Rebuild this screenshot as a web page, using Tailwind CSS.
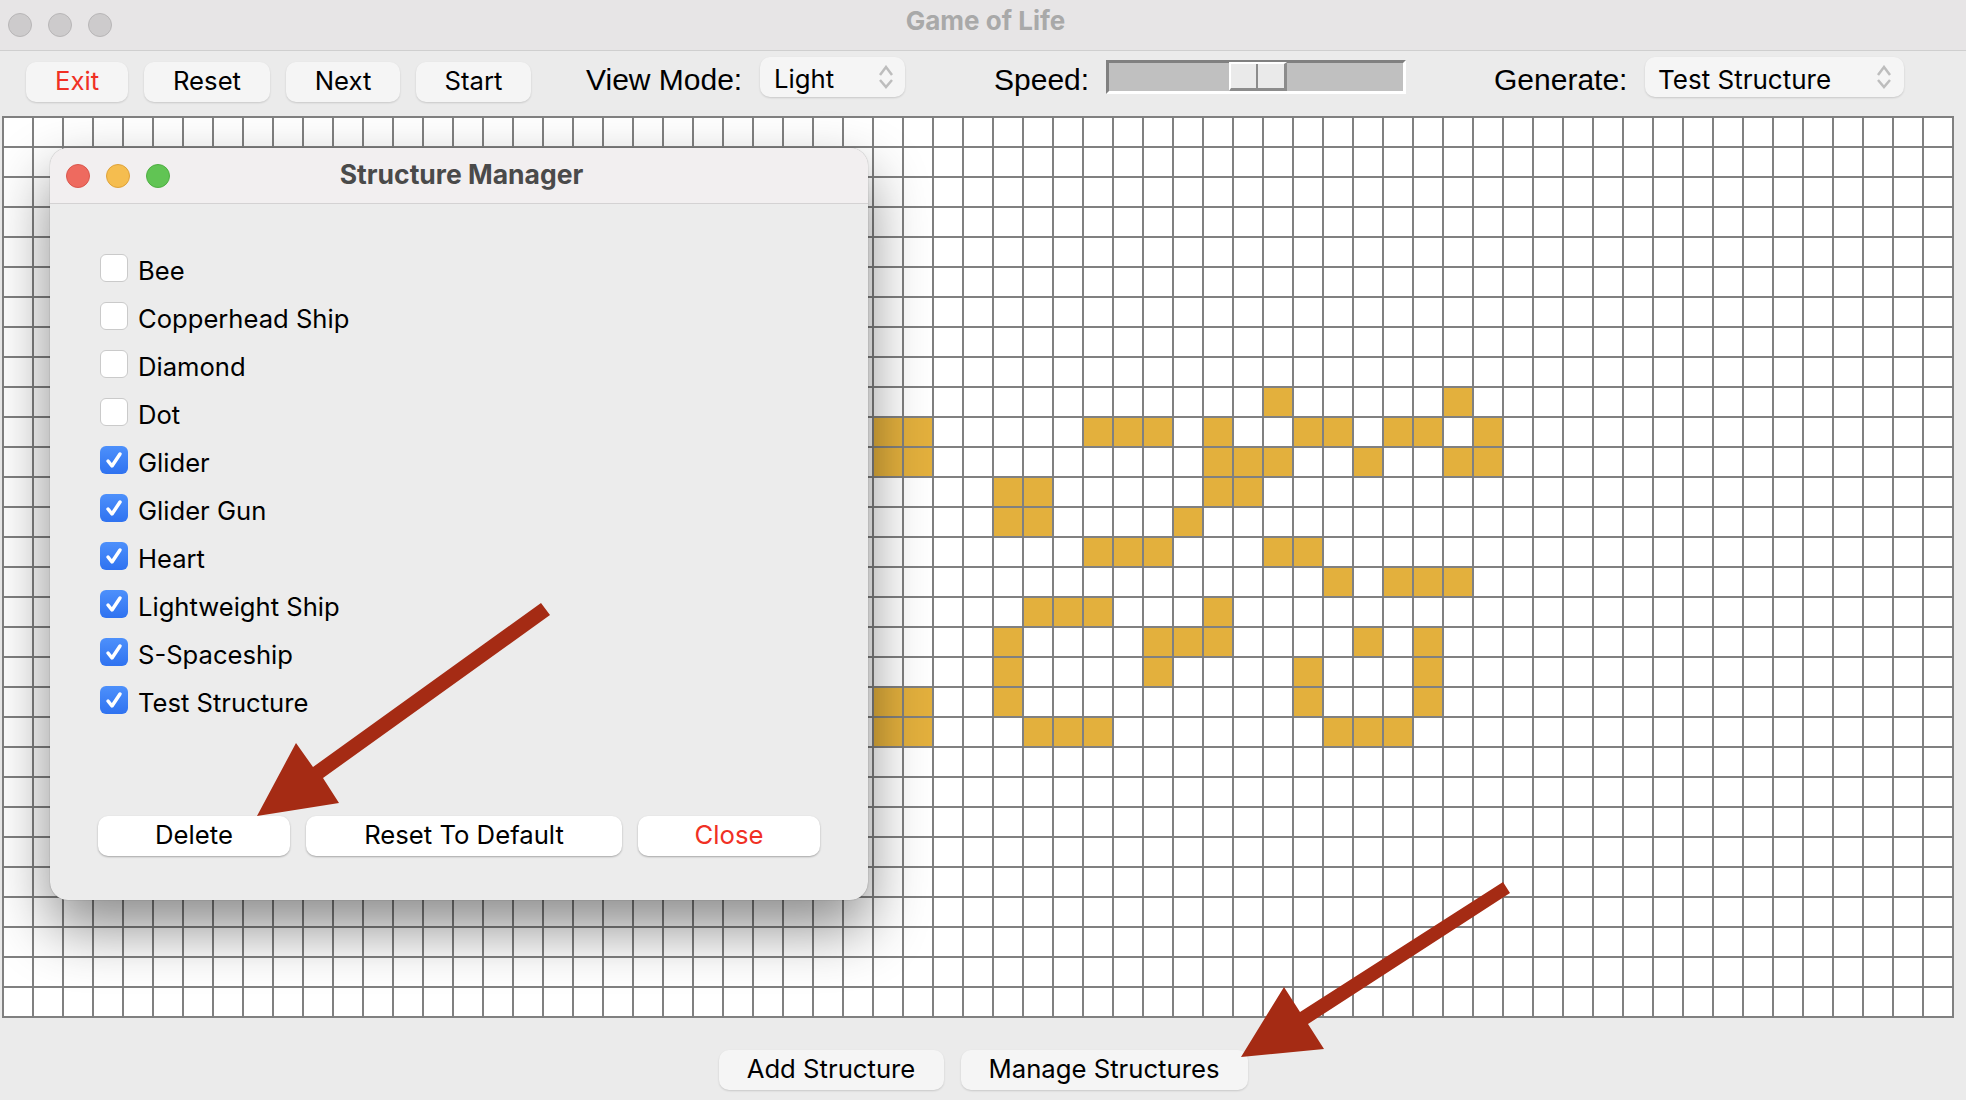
<!DOCTYPE html>
<html lang="en">
<head>
  <meta charset="UTF-8"/>
  <title>Game of Life</title>
  <script src="https://cdn.jsdelivr.net/npm/@tailwindcss/browser@4"></script>
</head>
<body class="bg-[#ebebeb] font-['Inter',sans-serif] text-black overflow-hidden">

<div class="relative w-[1966px] h-[1100px] flex flex-col">

  <!-- Title bar -->
  <div class="relative h-[51px] shrink-0 bg-[#e7e5e6] border-b border-[#cfcfcf] flex items-center pl-[8px] gap-[16px]">
    <span class="w-[24px] h-[24px] rounded-full bg-[#cdcbcc] border border-[#b8b6b7]"></span>
    <span class="w-[24px] h-[24px] rounded-full bg-[#cdcbcc] border border-[#b8b6b7]"></span>
    <span class="w-[24px] h-[24px] rounded-full bg-[#cdcbcc] border border-[#b8b6b7]"></span>
    <div class="absolute inset-0 flex items-center justify-center pl-[5px] pb-[9px] text-[26px] font-bold text-[#a9a9a9]">Game of Life</div>
  </div>

  <!-- Toolbar -->
  <div class="h-[65px] shrink-0 flex items-start pt-[6px] pl-[26px]">
    <div class="flex gap-[16px] mt-[5px]">
      <button class="w-[102px] h-[40px] pb-[2px] rounded-[10px] bg-[#f5f5f5] shadow-[0_1px_2px_rgba(0,0,0,.15)] text-[25.7px] text-[#f03024]">Exit</button>
      <button class="w-[126px] h-[40px] pb-[2px] rounded-[10px] bg-[#f5f5f5] shadow-[0_1px_2px_rgba(0,0,0,.15)] text-[25.7px]">Reset</button>
      <button class="w-[114px] h-[40px] pb-[2px] rounded-[10px] bg-[#f5f5f5] shadow-[0_1px_2px_rgba(0,0,0,.15)] text-[25.7px]">Next</button>
      <button class="w-[115px] h-[40px] pb-[2px] rounded-[10px] bg-[#f5f5f5] shadow-[0_1px_2px_rgba(0,0,0,.15)] text-[25.7px]">Start</button>
    </div>

    <span class="ml-[55px] w-[174px] h-[44px] flex items-center font-['Liberation_Sans',sans-serif] text-[30px] whitespace-nowrap">View Mode:</span>
    <div class="w-[145px] h-[40px] rounded-[10px] bg-[#f5f5f5] shadow-[0_1px_2px_rgba(0,0,0,.15)] flex items-center justify-between pl-[14px] pr-[12px] text-[25.7px]">
      <span class="relative top-[2px]">Light</span>
      <svg width="14" height="24" viewBox="0 0 14 24" fill="none" stroke="#bdbdbd" stroke-width="2.5"><path d="M1 10 7 2l6 8M1 15l6 7 6-7"/></svg>
    </div>

    <span class="ml-[89px] w-[112px] h-[44px] flex items-center font-['Liberation_Sans',sans-serif] text-[30px] whitespace-nowrap">Speed:</span>

    <!-- Slider -->
    <div class="relative mt-[3px] w-[300px] h-[34px] bg-[#c0c0c0] border-t-[3px] border-l-[3px] border-b-[3px] border-r-[3px] border-t-[#808080] border-l-[#808080] border-b-white border-r-white">
      <div class="absolute left-[120px] top-[-1px] w-[58px] h-[29px] flex bg-[#eaeaea] border-t-[2px] border-l-[2px] border-b-[3px] border-r-[3px] border-t-white border-l-white border-b-[#8c8c8c] border-r-[#8c8c8c]">
        <div class="w-[27px] border-r-[2px] border-[#8c8c8c]"></div>
      </div>
    </div>

    <span class="ml-[88px] w-[151px] h-[44px] flex items-center font-['Liberation_Sans',sans-serif] text-[30px] whitespace-nowrap">Generate:</span>
    <div class="w-[259px] h-[40px] rounded-[10px] bg-[#f5f5f5] shadow-[0_1px_2px_rgba(0,0,0,.15)] flex items-center justify-between pl-[13px] pr-[13px] text-[26px]">
      <span class="relative top-[2px]">Test Structure</span>
      <svg width="14" height="24" viewBox="0 0 14 24" fill="none" stroke="#bdbdbd" stroke-width="2.5"><path d="M1 10 7 2l6 8M1 15l6 7 6-7"/></svg>
    </div>
  </div>

  <!-- Board -->
  <div id="board" class="ml-[2px] shrink-0 w-[1952px] h-[902px] grid grid-cols-[repeat(65,28px)] grid-rows-[repeat(30,28px)] gap-[2px] p-[2px] bg-[#808080]"></div>

  <!-- Bottom buttons -->
  <div class="flex justify-center gap-[17px] mt-[32px]">
    <button class="w-[225px] h-[40px] pb-[3px] rounded-[10px] bg-[#f5f5f5] shadow-[0_1px_2px_rgba(0,0,0,.15)] text-[25.7px]">Add Structure</button>
    <button class="w-[287px] h-[40px] pb-[3px] rounded-[10px] bg-[#f5f5f5] shadow-[0_1px_2px_rgba(0,0,0,.15)] text-[25.7px]">Manage Structures</button>
  </div>

  <!-- Structure Manager dialog -->
  <div class="absolute left-[50px] top-[148px] w-[818px] h-[752px] rounded-[18px] bg-[#ececec] shadow-[0_28px_60px_rgba(0,0,0,.46),0_0_1px_rgba(0,0,0,.5)] overflow-hidden flex flex-col">
    <div class="h-[56px] shrink-0 relative bg-[#f2eff0] border-b border-[#d4d2d3] flex items-center pl-[16px] gap-[16px]">
      <span class="w-[24px] h-[24px] rounded-full bg-[#ee6a5f] border border-[#d9574d]"></span>
      <span class="w-[24px] h-[24px] rounded-full bg-[#f5bd4f] border border-[#dea23a]"></span>
      <span class="w-[24px] h-[24px] rounded-full bg-[#61c454] border border-[#4fae43]"></span>
      <div class="absolute inset-0 flex items-center justify-center pl-[5px] pb-[1px] text-[26.5px] font-bold text-[#4a4a4a]">Structure Manager</div>
    </div>

    <div id="list" class="pl-[50px] pt-[40px] flex flex-col"></div>

    <div class="absolute left-[48px] top-[668px] flex gap-[16px]">
      <button class="w-[192px] h-[40px] pb-[2px] rounded-[10px] bg-white shadow-[0_1px_2px_rgba(0,0,0,.3)] text-[25.7px]">Delete</button>
      <button class="w-[316px] h-[40px] pb-[2px] rounded-[10px] bg-white shadow-[0_1px_2px_rgba(0,0,0,.3)] text-[25.7px]">Reset To Default</button>
      <button class="w-[182px] h-[40px] pb-[2px] rounded-[10px] bg-white shadow-[0_1px_2px_rgba(0,0,0,.3)] text-[25.7px] text-[#f03024]">Close</button>
    </div>
  </div>

  <!-- Red arrows drawn over the screenshot -->
  <svg class="absolute inset-0 pointer-events-none" width="1966" height="1100" viewBox="0 0 1966 1100" fill="#a52b14">
    <path d="M541 603 550 615 323 778 339 803 257 816 296 743 313 767Z"/>
    <path d="M1503 882 1510 893 1308 1024 1324 1049 1241 1057 1284 987 1300 1012Z"/>
  </svg>
</div>

<script>
  // live cells per row, column indexes
  const alive = {
    9: [42, 48],
    10: [29, 30, 36, 37, 38, 40, 43, 44, 46, 47, 49],
    11: [29, 30, 40, 41, 42, 45, 48, 49],
    12: [33, 34, 40, 41],
    13: [33, 34, 39],
    14: [36, 37, 38, 42, 43],
    15: [44, 46, 47, 48],
    16: [34, 35, 36, 40],
    17: [33, 38, 39, 40, 45, 47],
    18: [33, 38, 43, 47],
    19: [29, 30, 33, 43, 47],
    20: [29, 30, 34, 35, 36, 44, 45, 46]
  };
  const board = document.getElementById("board");
  for (let r = 0; r < 30; r++) {
    for (let c = 0; c < 65; c++) {
      const cell = document.createElement("div");
      cell.className = (alive[r] || []).includes(c) ? "bg-[#e3b03d]" : "bg-white";
      board.appendChild(cell);
    }
  }

  const structures = [
    ["Bee", false], ["Copperhead Ship", false], ["Diamond", false], ["Dot", false],
    ["Glider", true], ["Glider Gun", true], ["Heart", true], ["Lightweight Ship", true],
    ["S-Spaceship", true], ["Test Structure", true]
  ];
  const list = document.getElementById("list");
  structures.forEach(([name, on]) => {
    const row = document.createElement("div");
    row.className = "h-[48px] flex items-center gap-[10px] text-[25.6px]";
    const box = on
      ? '<span class="w-[28px] h-[28px] rounded-[6px] bg-gradient-to-b from-[#4d90fb] to-[#2f72f0] flex items-center justify-center"><svg width="20" height="20" viewBox="0 0 20 20" fill="none" stroke="white" stroke-width="3.5" stroke-linecap="round" stroke-linejoin="round"><path d="M4 11l4 5 8-12"/></svg></span>'
      : '<span class="w-[28px] h-[28px] rounded-[6px] bg-white border border-[#cacaca]"></span>';
    row.innerHTML = box + '<span class="relative top-[3px]">' + name + "</span>";
    list.appendChild(row);
  });
</script>
</body>
</html>
